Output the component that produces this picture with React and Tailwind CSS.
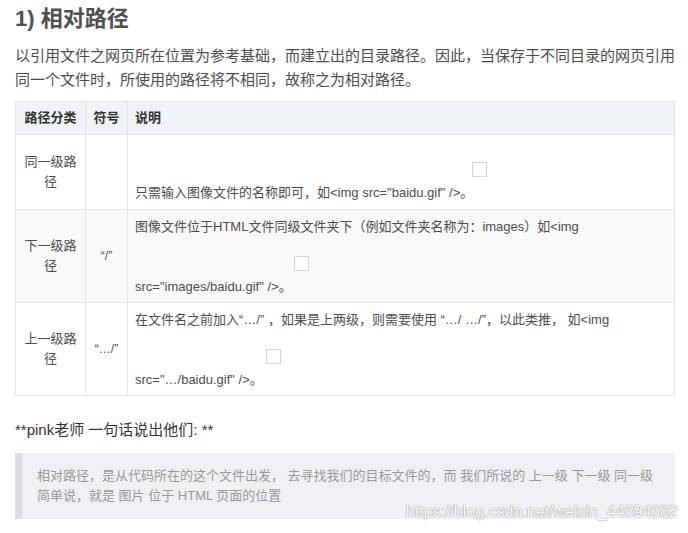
const rows = [
  {
    kind: '同一级路径',
    sym: '',
    bg: 'bg-white',
    lines: [null, '只需输入图像文件的名称即可，如<img src="baidu.gif" />。'],
    box: 'ml-[337px]',
    first: true,
  },
  {
    kind: '下一级路径',
    sym: '“/”',
    bg: 'bg-[#f9f9f9]',
    lines: ['图像文件位于HTML文件同级文件夹下（例如文件夹名称为：images）如<img', 'src="images/baidu.gif" />。'],
    box: 'ml-[159px]',
  },
  {
    kind: '上一级路径',
    sym: '“…/”',
    bg: 'bg-white',
    lines: ['在文件名之前加入“…/” ，如果是上两级，则需要使用 “…/ …/”，以此类推， 如<img', 'src="…/baidu.gif" />。'],
    box: 'ml-[131px]',
  },
];

function Broken({ className }) {
  return <div className={`w-[15px] h-[15px] border border-[#d4d4d4] bg-white ${className}`} />;
}

export default function App() {
  return (
    <div className="relative w-[688px] h-[533px] bg-white overflow-hidden px-[15px] pt-[4px] text-[#4d4d4d] font-['Liberation_Sans','Noto_Sans_CJK_SC',sans-serif]">
      <h3 className="text-[22px] leading-[30px] font-bold text-[#4f4f4f]">1) 相对路径</h3>

      <p className="mt-[10px] text-[15px] leading-[24px] w-[660px]">
        以引用文件之网页所在位置为参考基础，而建立出的目录路径。因此，当保存于不同目录的网页引用同一个文件时，所使用的路径将不相同，故称之为相对路径。
      </p>

      <div className="mt-[9px] w-[660px] border border-[#e5e5e5] text-[13px] leading-[20px]">
        <div className="grid grid-cols-[70px_42px_1fr] h-[33px] bg-[#eff3f5] border-b border-[#e5e5e5] font-bold text-[#333]">
          <div className="border-r border-[#e5e5e5] flex items-center justify-center">路径分类</div>
          <div className="border-r border-[#e5e5e5] flex items-center justify-center">符号</div>
          <div className="flex items-center px-[7px]">说明</div>
        </div>

        {rows.map((r, i) => (
          <div
            key={i}
            className={`grid grid-cols-[70px_42px_1fr] ${r.bg} ${i < rows.length - 1 ? 'border-b border-[#e5e5e5]' : ''}`}
          >
            <div className="border-r border-[#e5e5e5] flex items-center justify-center px-[6px] text-center">
              {r.kind}
            </div>
            <div className="border-r border-[#e5e5e5] flex items-center justify-center text-[12px] text-[#4d4d4d]">
              {r.sym}
            </div>
            {r.first ? (
              <div className="px-[7px] pt-[27px] pb-[6px]">
                <Broken className={r.box} />
                <div className="mt-[6px]">{r.lines[1]}</div>
              </div>
            ) : (
              <div className="px-[7px] pt-[7px] pb-[5px]">
                <div>{r.lines[0]}</div>
                <Broken className={`mt-[19px] ${r.box}`} />
                <div className="mt-[6px]">{r.lines[1]}</div>
              </div>
            )}
          </div>
        ))}
      </div>

      <p className="mt-[22px] text-[15px] leading-[24px] text-[#333]">**pink老师 一句话说出他们: **</p>

      <blockquote className="mt-[11px] w-[660px] border-l-[7px] border-[#dcdde2] bg-[#eef0f4] pl-[15px] pr-[12px] py-[13px] text-[13px] leading-[20px] text-[#999]">
        相对路径，是从代码所在的这个文件出发， 去寻找我们的目标文件的，而 我们所说的 上一级 下一级 同一级
        <br />
        简单说，就是 图片 位于 HTML 页面的位置
      </blockquote>

      <div className="absolute right-[10px] top-[502px] text-[16px] leading-[20px] text-white [text-shadow:0_0_1px_#8c8c8c,0_0_1px_#8c8c8c] font-['Liberation_Sans',sans-serif]">
        https://blog.csdn.net/weixin_44694682
      </div>
    </div>
  );
}
